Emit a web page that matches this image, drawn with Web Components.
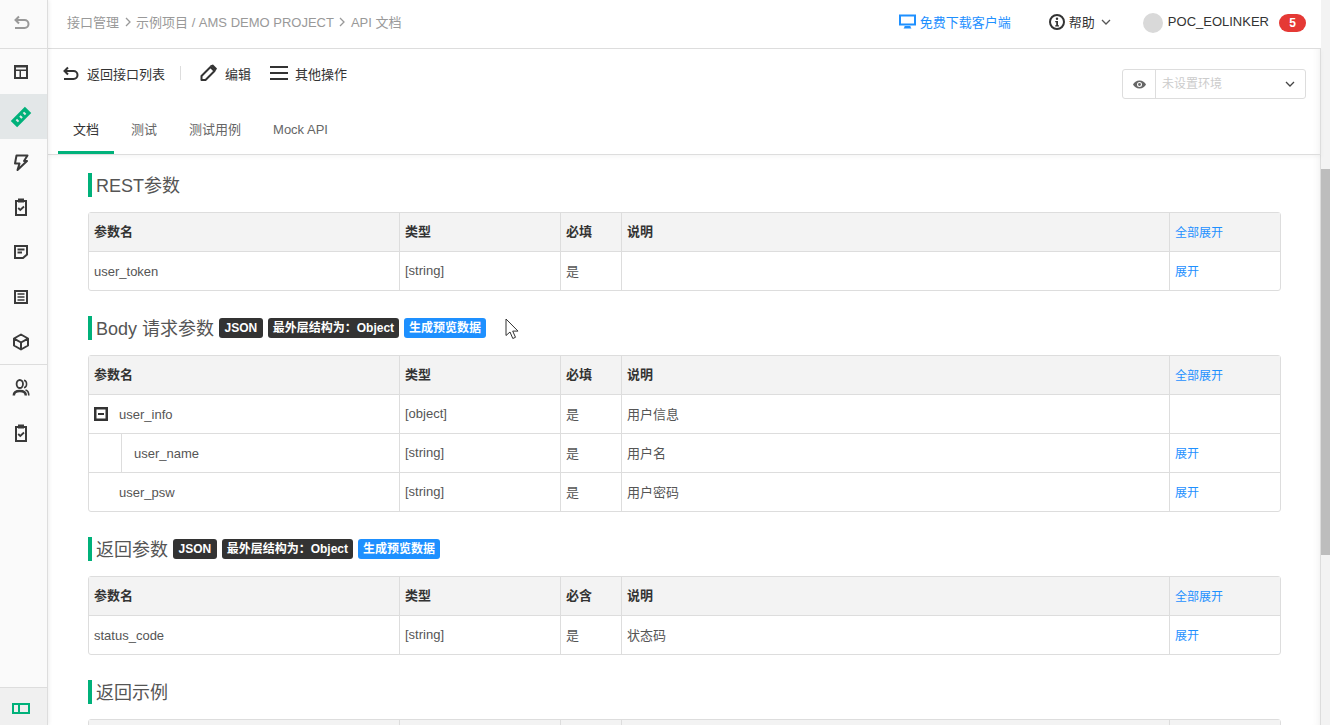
<!DOCTYPE html>
<html lang="zh"><head><meta charset="utf-8">
<style>
html,body{margin:0;height:100%;overflow:hidden;background:#fff}
body{font-family:"Liberation Sans","Noto Sans CJK SC",sans-serif;font-size:13px;color:#333}
</style></head><body>
<api-app></api-app>
<script>
const icons={
 back:'<path d="M3.500 5h9a4 4 0 0 1 0 8H3" fill="none" stroke="currentColor" stroke-width="2"/><path d="M7 1.500 3.500 5 7 8.500" fill="none" stroke="currentColor" stroke-width="2"/>',
 layout:'<path fill-rule="evenodd" d="M2 2h14v14H2zM4 4.500v2h10v-2zM4 8v6h3.500V8zm5 0v6H14V8z" fill="currentColor"/>',
 api:'<g transform="rotate(-45 9 9)"><path fill-rule="evenodd" d="M-1 4.500h20v9H-1zM3 7.500v3h2v-3zm5 0v3h2v-3zm5 0v3h2v-3z" fill="currentColor"/></g>',
 bolt:'<path d="M4.500 2.500h11L12 8h3L5.500 17 7.500 10.500H3z" fill="none" stroke="currentColor" stroke-width="2" stroke-linejoin="round"/>',
 task:'<path d="M4 3h10v14H4z" fill="none" stroke="currentColor" stroke-width="2"/><path d="M6 .500h6V4.500H6z" fill="currentColor"/><path d="m6.200 10 2.100 2L12 8.500" fill="none" stroke="currentColor" stroke-width="1.800"/>',
 note:'<path d="M3 3h12v8.500L11 15H3z" fill="none" stroke="currentColor" stroke-width="2"/><path d="M5.500 6.500h7M5.500 9.500h4.500" stroke="currentColor" stroke-width="1.800"/>',
 list:'<path d="M3 3h12v12H3z" fill="none" stroke="currentColor" stroke-width="2"/><path d="M5.500 6h7M5.500 9h7M5.500 12h7" stroke="currentColor" stroke-width="1.700"/>',
 cube:'<path d="M9 1.500 16 5.500v7l-7 4-7-4v-7zM2.500 5.800 9 9.500l6.500-3.700M9 9.500v6.500" fill="none" stroke="currentColor" stroke-width="2" stroke-linejoin="round"/>',
 user:'<ellipse cx="7.800" cy="5" rx="3.200" ry="4" fill="none" stroke="currentColor" stroke-width="1.800"/><path d="M12 1.200c1.800.5 2.600 2 2.600 3.800s-.8 3.300-2.600 3.800" fill="none" stroke="currentColor" stroke-width="1.500"/><path d="M1.800 16.500c0-3.200 2.500-4.500 6-4.500s6 1.300 6 4.500" fill="none" stroke="currentColor" stroke-width="2.500"/><path d="M13.500 11c2 .5 3.300 2.500 3.300 5.500" fill="none" stroke="currentColor" stroke-width="1.600"/>',
 panel:'<path fill-rule="evenodd" d="M0 0h18v11H0zM2 2v7h4V2zm6 0v7h8V2z" fill="currentColor"/>',
 edit:'<path d="M2.500 16v-4L11.500 3l4 4-9 9z" fill="none" stroke="currentColor" stroke-width="2" stroke-linejoin="round"/><path d="m11 1.500 5.500 5.500 1.500-2.500-4-4z" fill="currentColor"/>',
 menu:'<path d="M0 3h18M0 9h18M0 15h18" stroke="currentColor" stroke-width="2"/>',
 monitor:'<path fill-rule="evenodd" d="M0 1.500h17v11H0zM2 3.500v7h13v-7z" fill="currentColor"/><path d="M5.500 13h6v1l1 1.500h-8l1-1.500z" fill="currentColor"/>',
 info:'<circle cx="8" cy="8" r="7" fill="none" stroke="currentColor" stroke-width="2"/><circle cx="8" cy="4.800" r="1.200" fill="currentColor"/><path d="M6.200 7h2.800v4.200h1v1.200H6.200v-1.200h1V8.200h-1z" fill="currentColor"/>',
 chev:'<path d="m2 4 4 4 4-4" fill="none" stroke="currentColor" stroke-width="1.300"/>',
 eye:'<path fill-rule="evenodd" d="M6.500 1.500C9.500 1.500 12 3.500 13 5.500 12 7.500 9.500 9.500 6.500 9.500S1 7.500 0 5.500C1 3.500 3.500 1.500 6.500 1.500zm0 1.500a2.500 2.500 0 1 0 0 5 2.500 2.500 0 0 0 0-5z" fill="currentColor"/><circle cx="6.500" cy="5.500" r="1.400" fill="currentColor"/>',
 minus:'<path fill-rule="evenodd" d="M0 0h14v14H0zM2.500 2.500v9h9v-9z" fill="currentColor"/><path d="M4 6h6v2H4z" fill="currentColor"/>',
 cursor:'<path d="M1 1v16.500l4-3.500 2.800 6.500 2.700-1.200-2.800-6.200h5.300z" fill="#fff" stroke="#333" stroke-width="1"/>'
};
function def(name,css,html,extra){
  const t=document.createElement('template');
  t.innerHTML='<style>'+css+'</style>'+html;
  customElements.define(name,class extends HTMLElement{
    constructor(){super();this.attachShadow({mode:'open'}).appendChild(t.content.cloneNode(true));}
    connectedCallback(){if(extra)extra.call(this,this.shadowRoot);}
  });
}
def('ui-icon',':host{display:inline-flex;flex:none;line-height:0}svg{display:block;overflow:visible}','<svg></svg>',function(r){
  const s=r.querySelector('svg'),w=this.getAttribute('w')||18,h=this.getAttribute('h')||w,v='0 0 '+w+' '+h;
  s.setAttribute('width',w);s.setAttribute('height',h);s.setAttribute('viewBox',v);s.innerHTML=icons[this.getAttribute('name')]||'';
});
def('side-item',`:host{display:flex;align-items:center;justify-content:center;height:45px;color:#3a3a3a;padding-right:5px;box-sizing:border-box}
:host([active]){background:#e3e7e8;color:#00b17a}`,'<slot></slot>');
def('side-bar',`:host{display:flex;flex-direction:column;width:47px;flex:none;background:#fafafa;border-right:1px solid #ddd;box-shadow:1px 0 4px rgba(0,0,0,.07);position:relative;z-index:3}
.back{height:48px;display:flex;align-items:center;justify-content:center;color:#999;border-bottom:1px solid #ddd;padding-right:5px}
.nav{flex:1;display:flex;flex-direction:column}
.sep{border-top:1px solid #ddd}
.foot{height:34px;padding-top:3px;border-top:1px solid #ddd;background:#f0f0f0;display:flex;align-items:center;justify-content:center;color:#00b17a;padding-right:5px}`,
`<div class="back"><ui-icon name="back"></ui-icon></div>
<div class="nav">
<side-item><ui-icon name="layout"></ui-icon></side-item>
<side-item active><ui-icon name="api"></ui-icon></side-item>
<side-item><ui-icon name="bolt"></ui-icon></side-item>
<side-item><ui-icon name="task"></ui-icon></side-item>
<side-item><ui-icon name="note"></ui-icon></side-item>
<side-item><ui-icon name="list"></ui-icon></side-item>
<side-item><ui-icon name="cube"></ui-icon></side-item>
<div class="sep"></div>
<side-item><ui-icon name="user"></ui-icon></side-item>
<side-item><ui-icon name="task"></ui-icon></side-item>
</div>
<div class="foot"><ui-icon name="panel" w="18" h="11"></ui-icon></div>`);
def('top-bar',`:host{display:flex;align-items:center;flex:none;border-bottom:1px solid #ddd;background:#fff;color:#999;padding:0 15px 5px 19px;box-sizing:content-box;height:43px;position:relative;z-index:2}
.crumb{flex:1;display:flex;align-items:center;gap:2.500px}
.dl{display:flex;align-items:center;gap:4px;color:#1e90ff;margin-right:38px}
.help{display:flex;align-items:center;gap:4px;color:#333;margin-right:31px}
.user{display:flex;align-items:center;color:#333}
.av{width:20px;height:20px;border-radius:50%;background:#d9d9d9;margin:2px 5px 0 0}
.badge{background:#e53935;color:#fff;font-size:12px;font-weight:700;border-radius:9px;width:27px;height:18px;display:flex;align-items:center;justify-content:center;margin:2px 0 0 10px}
.chev{color:#555;margin-left:1px}`,
`<div class="crumb"><span>接口管理</span><ui-icon name="chev" w="12" style="transform:rotate(-90deg)"></ui-icon><span>示例项目 / AMS DEMO PROJECT</span><ui-icon name="chev" w="12" style="transform:rotate(-90deg)"></ui-icon><span>API 文档</span></div>
<div class="dl"><ui-icon name="monitor" w="17"></ui-icon><span>免费下载客户端</span></div>
<div class="help"><ui-icon name="info" w="16"></ui-icon><span>帮助</span><ui-icon class="chev" name="chev" w="12"></ui-icon></div>
<div class="user"><div class="av"></div><span>POC_EOLINKER</span><div class="badge">5</div></div>`);
def('tool-bar',`:host{display:block;flex:none;height:105px;border-bottom:1px solid #ddd;border-right:1px solid #ddd;background:#fff;box-shadow:0 2px 5px rgba(0,0,0,.04),inset -8px 0 8px -8px rgba(0,0,0,.08);position:relative;z-index:1;color:#333}
.row{display:flex;align-items:flex-start;height:63px;padding:15px 14px 0 14px;box-sizing:border-box}
.acts{flex:1;display:flex;align-items:center;height:18px}
.a{display:inline-flex;align-items:center}
.div{width:1px;height:14px;background:#ddd;margin:0 18px 0 15px}
.env{width:184px;height:30px;margin-top:5px;box-sizing:border-box;border:1px solid #ddd;border-radius:3px;display:flex;align-items:center;color:#ccc;font-size:12px}
.eye{width:32px;height:100%;border-right:1px solid #ddd;display:flex;align-items:center;justify-content:center;color:#666}
.sel{flex:1;padding:0 6px 3px}
.cv{margin-right:9px;color:#444}
.tabs{display:flex;height:42px;padding-left:10px;color:#666}
.tab{padding:0 15px;line-height:36px;height:42px;box-sizing:border-box;margin-right:2px}
.tab.on{color:#333;border-bottom:3px solid #00b17a}`,
`<div class="row"><div class="acts">
<span class="a"><ui-icon name="back" style="margin:3px 8px 0 -1px"></ui-icon>返回接口列表</span><span class="div"></span>
<span class="a" style="margin-right:19px"><ui-icon name="edit" style="margin-right:8px"></ui-icon>编辑</span>
<span class="a"><ui-icon name="menu" style="margin-right:7px"></ui-icon>其他操作</span>
</div>
<div class="env"><div class="eye"><ui-icon name="eye" w="13" h="11"></ui-icon></div><div class="sel">未设置环境</div><ui-icon class="cv" name="chev" w="12"></ui-icon></div></div>
<div class="tabs"><div class="tab on">文档</div><div class="tab">测试</div><div class="tab">测试用例</div><div class="tab">Mock API</div></div>`);
def('sec-title',`:host{display:flex;align-items:center;height:24px;border-left:4px solid #00b17a;padding-left:4px;font-size:18px;color:#555;white-space:nowrap;gap:5px;line-height:24px}
.t{position:relative;top:1px}`,'<span class="t"><slot></slot></span><slot name="tags"></slot>');
def('t-tag',`:host{display:inline-flex;align-items:center;height:20px;padding:0 5px;border-radius:3px;background:#333;color:#fff;font-size:12px;font-weight:700;line-height:20px}
:host([wide]){padding:0 5.500px}
:host([blue]){background:#1e90ff}`,'<slot></slot>');
def('p-table',`:host{display:block;border:1px solid #ddd;border-radius:3px;margin-top:15px;background:#fff}`,'<slot></slot>');
def('p-row',`:host{display:grid;grid-template-columns:310px 161px 61px 548px 1fr;height:38px;border-top:1px solid #ddd}
:host([head]){background:#f3f3f3;border-top:0;font-weight:700;color:#333}
:host(:not([head])){color:#555}
.c{display:flex;align-items:center;box-sizing:border-box;padding:0 0 2px 5px;border-left:1px solid #ddd;white-space:nowrap;color:inherit}
:host([head]) .c{padding-bottom:3px}
:host([head]) .c.lnk{padding-bottom:1px}
.c.first{border-left:0;padding:0}
.n{display:flex;align-items:center;height:100%;padding-left:5px}
.tree{width:32px;height:100%;flex:none;border-right:1px solid #ddd;margin-right:12px}
.pad{margin-left:25px}
.ico{margin-right:11px;color:#333}
.lnk{color:#1e90ff;font-weight:400;font-size:12px}`,
`<div class="c first"><div class="n"></div></div><div class="c t"></div><div class="c r"></div><div class="c d"></div><div class="c lnk"></div>`,
function(r){
  const a=k=>this.getAttribute(k)||'';
  const n=r.querySelector('.n');
  const lvl=a('kind');
  if(lvl==='child'){n.style.paddingLeft='0';n.innerHTML='<div class="tree"></div><span></span>';n.lastChild.textContent=a('n');}
  else if(lvl==='open'){n.innerHTML='<ui-icon class="ico" name="minus" w="14"></ui-icon><span></span>';n.lastChild.textContent=a('n');}
  else if(lvl==='pad'){n.innerHTML='<span class="pad"></span>';n.lastChild.textContent=a('n');}
  else n.textContent=a('n');
  r.querySelector('.t').textContent=a('t');
  r.querySelector('.r').textContent=a('r');
  r.querySelector('.d').textContent=a('d');
  r.querySelector('.lnk').textContent=a('l');
});
def('doc-view',`:host{display:block;flex:1;min-height:0;overflow:hidden;padding:18px 39px 0 40px;background:#fff;border-right:1px solid #ddd;box-shadow:inset -8px 0 8px -8px rgba(0,0,0,.08)}
section{margin-bottom:25px}`,
`<section><sec-title>REST参数</sec-title><p-table>
<p-row head n="参数名" t="类型" r="必填" d="说明" l="全部展开"></p-row>
<p-row n="user_token" t="[string]" r="是" l="展开"></p-row></p-table></section>
<section><sec-title>Body 请求参数<t-tag slot="tags" wide>JSON</t-tag><t-tag slot="tags">最外层结构为：Object</t-tag><t-tag slot="tags" blue>生成预览数据</t-tag></sec-title><p-table>
<p-row head n="参数名" t="类型" r="必填" d="说明" l="全部展开"></p-row>
<p-row kind="open" n="user_info" t="[object]" r="是" d="用户信息"></p-row>
<p-row kind="child" n="user_name" t="[string]" r="是" d="用户名" l="展开"></p-row>
<p-row kind="pad" n="user_psw" t="[string]" r="是" d="用户密码" l="展开"></p-row></p-table></section>
<section><sec-title>返回参数<t-tag slot="tags" wide>JSON</t-tag><t-tag slot="tags">最外层结构为：Object</t-tag><t-tag slot="tags" blue>生成预览数据</t-tag></sec-title><p-table>
<p-row head n="参数名" t="类型" r="必含" d="说明" l="全部展开"></p-row>
<p-row n="status_code" t="[string]" r="是" d="状态码" l="展开"></p-row></p-table></section>
<section><sec-title>返回示例</sec-title><p-table><p-row head></p-row></p-table></section>`);
def('scroll-bar',`:host{display:block;width:9px;flex:none;background:#f3f3f3;padding-top:169px;box-sizing:border-box}
.th{height:386px;background:#bdbdbd}`,'<div class="th"></div>');
def('api-app',`:host{display:flex;width:1330px;height:725px;overflow:hidden;position:relative}
.main{flex:1;min-width:0;display:flex;flex-direction:column}
.cur{position:absolute;left:505px;top:318px}`,
`<side-bar></side-bar><div class="main"><top-bar></top-bar><tool-bar></tool-bar><doc-view></doc-view></div><scroll-bar></scroll-bar>
<ui-icon class="cur" name="cursor" w="14" h="21"></ui-icon>`);
</script>
</body></html>
